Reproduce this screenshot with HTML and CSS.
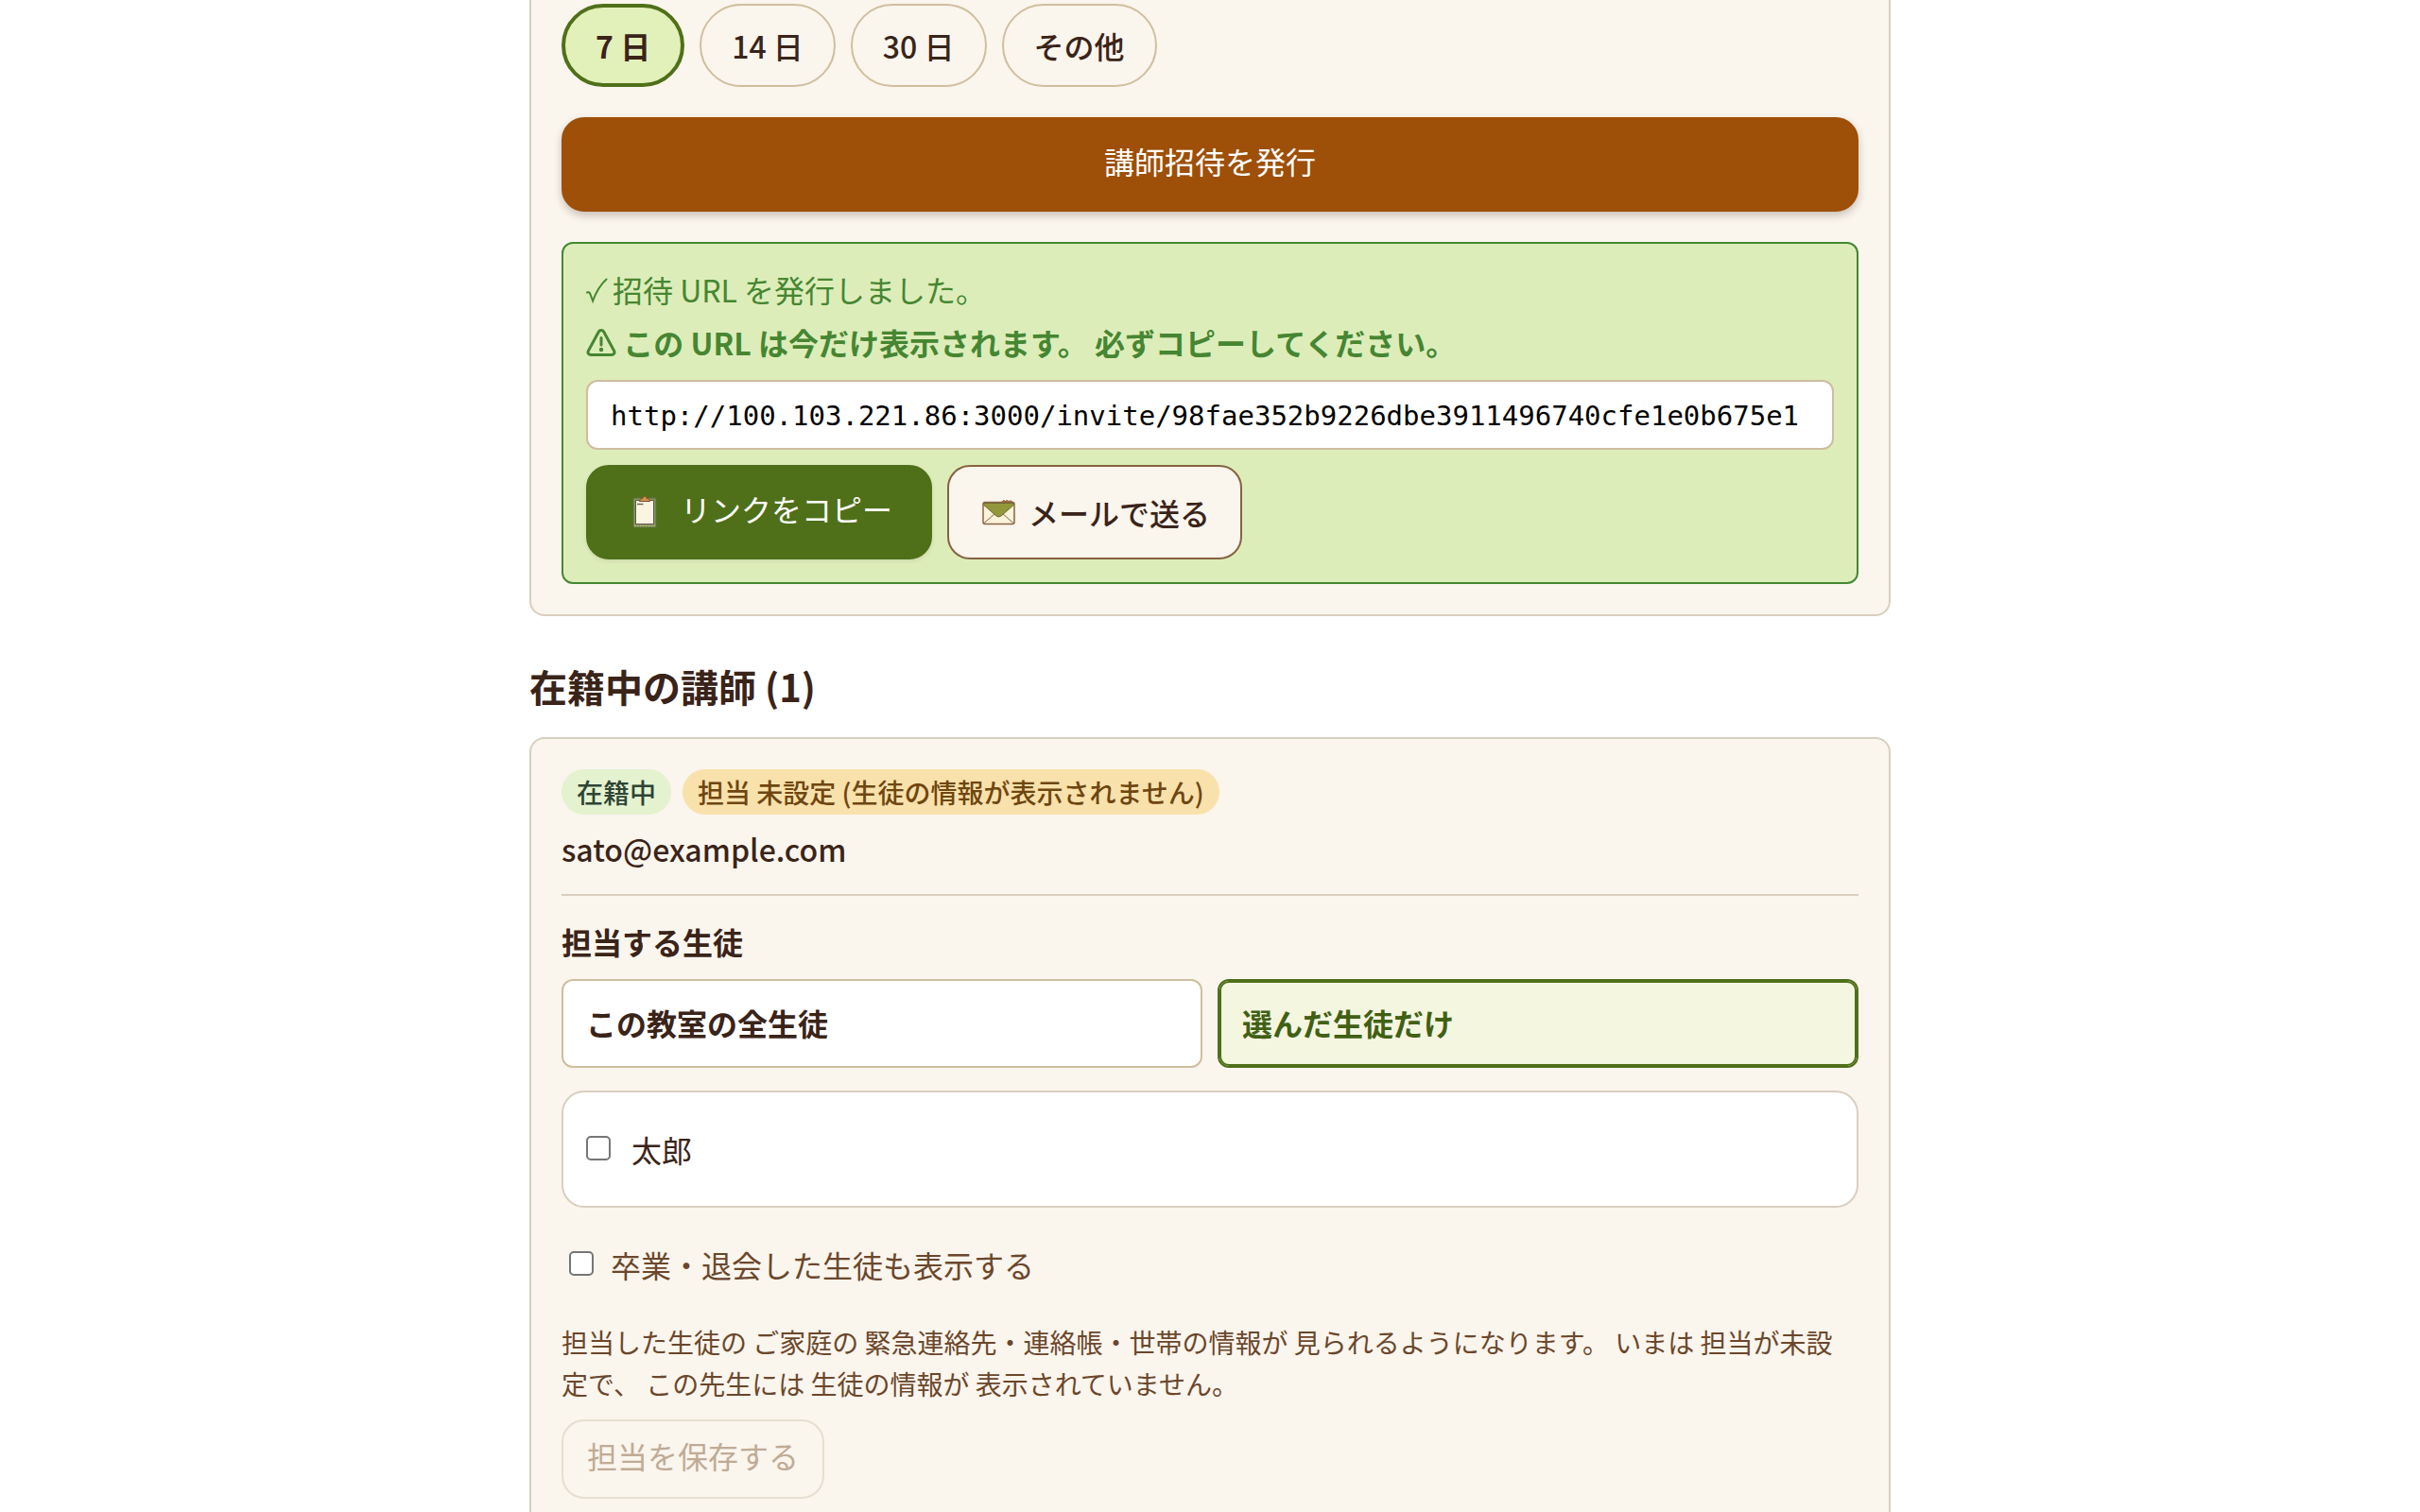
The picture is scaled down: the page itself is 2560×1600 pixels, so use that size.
FILE: index.html
```html
<!DOCTYPE html>
<html lang="ja">
<head>
<meta charset="UTF-8">
<meta name="viewport" content="width=device-width, initial-scale=1.0">
<title>講師の管理</title>
<link rel="stylesheet" href="styles.css">
</head>
<body>
<main class="container">

  <!-- ---------- INVITE ---------- -->
  <section class="card card-invite">
    <div class="chips">
      <button type="button" class="chip active">7 日</button>
      <button type="button" class="chip">14 日</button>
      <button type="button" class="chip">30 日</button>
      <button type="button" class="chip">その他</button>
    </div>

    <button type="button" class="btn btn-primary">講師招待を発行</button>

    <div class="notice" role="status">
      <p>
        <svg class="mark mark-check" viewBox="0 0 24 28" aria-hidden="true"><path d="M1 15.500c1.500-.8 2.500-.3 3.300 1.500l2.800 7.500C10.500 15 15.500 7 21.500 1.500"/></svg>招待 URL を発行しました。
      </p>
      <p class="strong">
        <svg class="mark mark-warn" viewBox="0 0 32 30" aria-hidden="true"><path d="M13.200 3.200c1.200-2.200 4.400-2.200 5.600 0l10.800 20c1.200 2.200-.2 4.300-2.700 4.300H5.100c-2.500 0-3.900-2.100-2.700-4.300z"/><path d="M16 9.500v7.500" class="bang"/><circle cx="16" cy="22" r="2.200"/></svg>
        この URL は今だけ表示されます。 必ずコピーしてください。
      </p>
      <input type="text" class="invite-url" aria-label="招待 URL" readonly value="http://100.103.221.86:3000/invite/98fae352b9226dbe3911496740cfe1e0b675e1">
      <div class="actions">
        <button type="button" class="btn btn-copy">
          <svg class="icon-clip" viewBox="0 0 40 40" aria-hidden="true">
            <rect x="8" y="6" width="24" height="31" rx="1.500" fill="#7f9a50" stroke="#5f6f4a"/>
            <path d="M9 35.500h22" stroke="#c9b176" stroke-width="1.500" stroke-dasharray="1.500 1.500"/>
            <path d="M10.500 8.500h19v25h-19z" fill="#faf5e0" stroke="#6b5060"/>
            <path d="M12 12.500h6.500" stroke="#7a6460" stroke-width="1.500"/>
            <path d="M14.500 9.500c0-2 1.500-3 3.500-3 0-3 4-3 4 0 2 0 3.500 1 3.500 3z" fill="#d8964a" stroke="#7a4a2c"/>
          </svg>
          <span>リンクをコピー</span>
        </button>
        <a href="mailto:" class="btn-mail">
          <svg class="icon-mail" viewBox="0 0 36 36" aria-hidden="true">
            <path d="M22 8c0-3 3-3 3.500-1 .5-2 3-2 3.500 0 1-2 4-1 4 1" fill="#b5854a" stroke="#8a5a3a"/>
            <rect x="2" y="7.500" width="33" height="23" rx="2" fill="#faf3d9" stroke="#8a6446" stroke-width="1.500"/>
            <path d="M3 29.500l11.500-10M34 29.500l-11.500-10" fill="none" stroke="#8a6446"/>
            <path d="M2.800 8.500h31.400v2L21 22q-2.500 2-5 0L2.800 10.500z" fill="#93973b" stroke="#6f6a35"/>
          </svg>
          <span>メールで送る</span>
        </a>
      </div>
    </div>
  </section>

  <!-- ---------- TEACHERS ---------- -->
  <h2>在籍中の講師 (1)</h2>

  <section class="card card-teacher">
    <div class="badges">
      <span class="badge badge-ok">在籍中</span>
      <span class="badge badge-warn">担当 未設定 (生徒の情報が表示されません)</span>
    </div>
    <p class="email">sato@example.com</p>

    <div class="assign">
      <h3>担当する生徒</h3>
      <div class="options">
        <button type="button" class="option">この教室の全生徒</button>
        <button type="button" class="option active">選んだ生徒だけ</button>
      </div>

      <div class="students">
        <label class="check"><input type="checkbox">太郎</label>
      </div>
      <label class="check check-muted"><input type="checkbox">卒業・退会した生徒も表示する</label>

      <p class="help">担当した生徒の ご家庭の 緊急連絡先・連絡帳・世帯の情報が 見られるようになります。 いまは 担当が未設定で、 この先生には 生徒の情報が 表示されていません。</p>
      <button type="button" class="btn btn-save" disabled>担当を保存する</button>
    </div>
  </section>

</main>
</body>
</html>
```
FILE: styles.css
```css
/* ---------- GLOBAL ---------- */
*{box-sizing:border-box;}
body{margin:0;background:#fff;color:#3a2419;font-family:"Noto Sans CJK JP",sans-serif;font-size:32px;line-height:48px;}
p,h2,h3{margin:0;}
button,input{font:inherit;color:inherit;}
button{cursor:pointer;}

.container{max-width:1440px;height:100vh;margin:0 auto;display:flex;flex-direction:column;overflow:hidden;}
h2{font-size:40px;line-height:56px;font-weight:700;margin:46px 0 26px;}
h3{font-size:32px;font-weight:700;margin-bottom:16px;}

.card{background:#faf5ed;border:2px solid #d9cfbf;border-radius:16px;padding:32px;}
.card-invite{border-top:0;border-radius:0 0 16px 16px;padding-top:4px;}
.card-teacher{flex:1;border-bottom:0;border-radius:16px 16px 0 0;}

/* ---------- CHIPS ---------- */
.chips{display:flex;flex-wrap:wrap;gap:16px;}
.chip{height:88px;padding:0 32px;border:2px solid #cfbf9f;border-radius:44px;background:none;font-weight:500;}
.chip.active{border:4px solid #4f7019;background:#e2f0b9;font-weight:700;}

/* ---------- BUTTONS ---------- */
.btn{height:100px;padding:0 40px 8px;border:2px solid transparent;border-radius:24px;font-weight:400;color:#fff;}
.btn-primary{display:block;width:100%;margin:32px 0;border-color:#9e4f08;background:#9e4f08;box-shadow:0 4px 8px rgba(58,36,25,.25);}
.btn-copy{display:flex;align-items:center;gap:18px;border-color:#4f7019;background:#4f7019;box-shadow:0 2px 4px rgba(58,36,25,.1);}
.btn-mail{display:flex;align-items:center;gap:14px;padding:0 32px 0 34px;border:2px solid #85643f;border-radius:24px;background:#faf5ed;color:#3a2419;font-weight:500;text-decoration:none;}
.btn-save{height:84px;padding:0 25px 8px;border-color:#d2cbb4;background:none;color:#85643f;opacity:.5;cursor:default;}
.icon-clip{width:40px;height:40px;margin-top:6px;fill:none;}
.icon-mail{width:36px;height:36px;}

/* ---------- NOTICE ---------- */
.notice{display:flex;flex-direction:column;gap:8px;padding:24px;border:2px solid #438831;border-radius:12px;background:#ddedba;color:#468632;}
.notice .strong{font-weight:700;}
.mark{fill:none;stroke:currentColor;stroke-linecap:round;}
.mark-check{width:24px;height:28px;margin-right:4px;stroke-width:2;vertical-align:-2px;}
.mark-warn{width:32px;height:30px;stroke-width:3;vertical-align:-2px;}
.mark-warn circle{fill:currentColor;stroke:none;}
.invite-url{width:100%;height:74px;margin:8px 0;padding:2px 24px 0;border:2px solid #cfbc9f;border-radius:12px;background:#fff;color:#000;font-family:"DejaVu Sans Mono",monospace;font-size:29px;}
.actions{display:flex;flex-wrap:wrap;gap:16px;}

/* ---------- TEACHER ---------- */
.badges{display:flex;flex-wrap:wrap;gap:12px;}
.badge{padding:0 16px;border-radius:24px;font-size:28px;font-weight:500;}
.badge-ok{background:#e4f2cf;color:#2f4436;}
.badge-warn{background:#f8e1ab;color:#6f4610;}
.email{margin:12px 0 24px;font-weight:500;}

.assign{border-top:2px solid #d9cfbf;padding-top:24px;}
.options{display:grid;grid-template-columns:1fr 1fr;gap:16px;}
.option{height:94px;padding:0 24px 2px;border:2px solid #cfbf9f;border-radius:12px;background:#fff;font-weight:700;text-align:left;}
.option.active{border-color:#4f7019;background:#f4f6e0;color:#416014;box-shadow:inset 0 0 0 2px #4f7019;}

.students{margin:24px 0 16px;padding:16px 24px;border:2px solid #d9cfbf;border-radius:24px;background:#fff;}
.check{display:flex;align-items:center;gap:22px;min-height:88px;}
.check input{width:26px;height:26px;margin:0 0 2px;appearance:none;border:2px solid #767676;border-radius:5px;background:#fff;}
.check-muted{gap:18px;margin-bottom:16px;padding-left:8px;color:#6b472c;}
.help{margin-bottom:16px;font-size:28px;line-height:44px;color:#6b472c;}
```
